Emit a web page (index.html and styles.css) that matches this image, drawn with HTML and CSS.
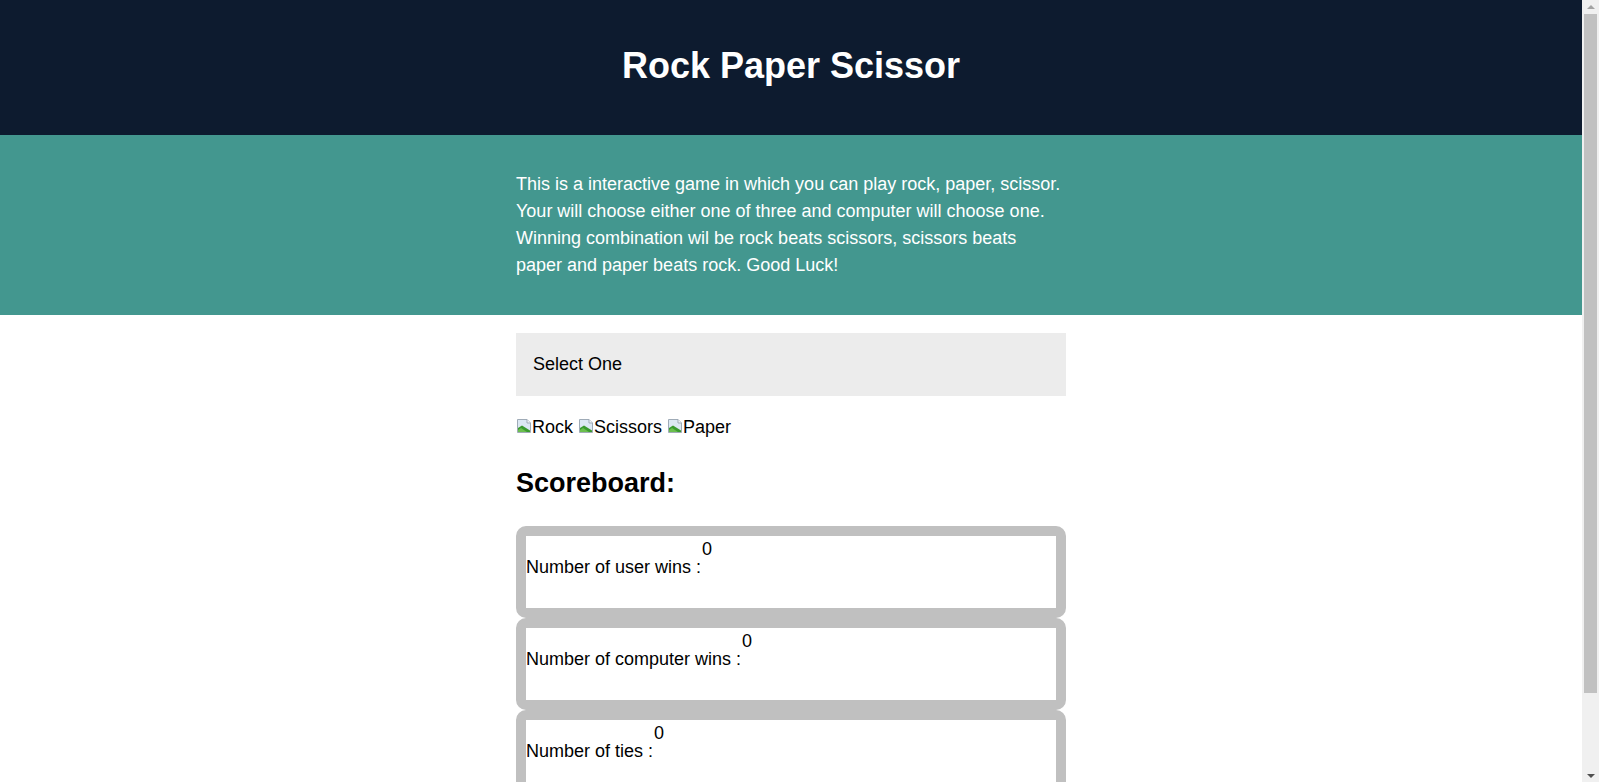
FILE: index.html
```html
<!DOCTYPE html>
<html lang="en">
<head>
<meta charset="utf-8">
<title>Rock Paper Scissor</title>
<link rel="stylesheet" href="styles.css">
</head>
<body>
<div class="page">
<header class="top">
  <h1 class="title">Rock Paper Scissor</h1>
</header>
<section class="intro">
  <div class="container">
    <p class="intro-text">This is a interactive game in which you can play rock, paper, scissor. Your will choose either one of three and computer will choose one. Winning combination wil be rock beats scissors, scissors beats paper and paper beats rock. Good Luck!</p>
  </div>
</section>
<main class="container game">
  <div class="select">Select One</div>
  <div class="choices">
    <span class="choice"><svg class="broken" width="16" height="16" viewBox="0 0 16 16"><path d="M1.5 1.5h9.5l3.5 3.5v9.5h-13z" fill="#dce8f3" stroke="#9fabb7"/><path d="M11 1.5v3.5h3.5" fill="#f4f6f8" stroke="#9fabb7"/><path d="M2 14 L2 10 L6 7.5 L14 12.5 L14 14 z" fill="#3a9a2e"/><path d="M2 14 L2 12 L5 10 L11 14 z" fill="#6cbf4f"/></svg>Rock</span>
    <span class="choice"><svg class="broken" width="16" height="16" viewBox="0 0 16 16"><path d="M1.5 1.5h9.5l3.5 3.5v9.5h-13z" fill="#dce8f3" stroke="#9fabb7"/><path d="M11 1.5v3.5h3.5" fill="#f4f6f8" stroke="#9fabb7"/><path d="M2 14 L2 10 L6 7.5 L14 12.5 L14 14 z" fill="#3a9a2e"/><path d="M2 14 L2 12 L5 10 L11 14 z" fill="#6cbf4f"/></svg>Scissors</span>
    <span class="choice"><svg class="broken" width="16" height="16" viewBox="0 0 16 16"><path d="M1.5 1.5h9.5l3.5 3.5v9.5h-13z" fill="#dce8f3" stroke="#9fabb7"/><path d="M11 1.5v3.5h3.5" fill="#f4f6f8" stroke="#9fabb7"/><path d="M2 14 L2 10 L6 7.5 L14 12.5 L14 14 z" fill="#3a9a2e"/><path d="M2 14 L2 12 L5 10 L11 14 z" fill="#6cbf4f"/></svg>Paper</span>
  </div>
  <h2 class="board-title">Scoreboard:</h2>
  <div class="score"><span class="label">Number of user wins :</span><span class="num">0</span></div>
  <div class="score"><span class="label">Number of computer wins :</span><span class="num">0</span></div>
  <div class="score"><span class="label">Number of ties :</span><span class="num">0</span></div>
</main>
</div>
<div class="scrollbar">
  <div class="arrow up"></div>
  <div class="thumb"></div>
  <div class="arrow down"></div>
</div>
</body>
</html>
```

FILE: styles.css
```css
html, body {
  margin: 0;
  padding: 0;
}
html {
  scrollbar-width: none;
}
body {
  font-family: "Liberation Sans", Arial, sans-serif;
  font-size: 18px;
  color: #000;
  background: #fff;
}
.page {
  margin-right: 17px;
}
.top {
  background: #0d1b2f;
  height: 135px;
  display: flex;
  align-items: center;
  justify-content: center;
}
.title {
  margin: 0;
  color: #fff;
  font-size: 36px;
  font-weight: bold;
  line-height: 41px;
  padding-bottom: 4px;
}
.container {
  width: 550px;
  margin: 0 auto;
}
.intro {
  background: #43978f;
  padding: 36px 0;
}
.intro-text {
  margin: 0;
  color: #fff;
  line-height: 27px;
}
.game {
  padding-top: 18px;
  padding-bottom: 60px;
}
.select {
  background: #ececec;
  padding: 18px 17px;
  line-height: 27px;
}
.choices {
  margin-top: 18px;
  line-height: 27px;
}
.choice {
  display: inline-flex;
  align-items: baseline;
}
.broken {
  align-self: center;
  margin-top: -4px;
}
.board-title {
  font-size: 27px;
  font-weight: bold;
  line-height: 40px;
  margin: 22px 0 23px;
}
.score {
  border: 10px solid #c0c0c0;
  border-radius: 10px;
  line-height: 27px;
  padding-bottom: 27px;
}
.label {
  margin-right: 1px;
}
.num {
  vertical-align: 18px;
}
.scrollbar {
  position: fixed;
  top: 0;
  right: 0;
  width: 17px;
  height: 100vh;
  background: #f0f0f0;
  display: flex;
  flex-direction: column;
  align-items: center;
}
.arrow {
  width: 0;
  height: 0;
  border-left: 4px solid transparent;
  border-right: 4px solid transparent;
  flex: none;
}
.arrow.up {
  margin: 5px 0 5px;
  border-bottom: 4px solid #a3a3a3;
}
.thumb {
  width: 13px;
  height: 679px;
  background: #c1c1c1;
  flex: none;
}
.arrow.down {
  margin-top: auto;
  margin-bottom: 4px;
  border-top: 4px solid #505050;
}
```
